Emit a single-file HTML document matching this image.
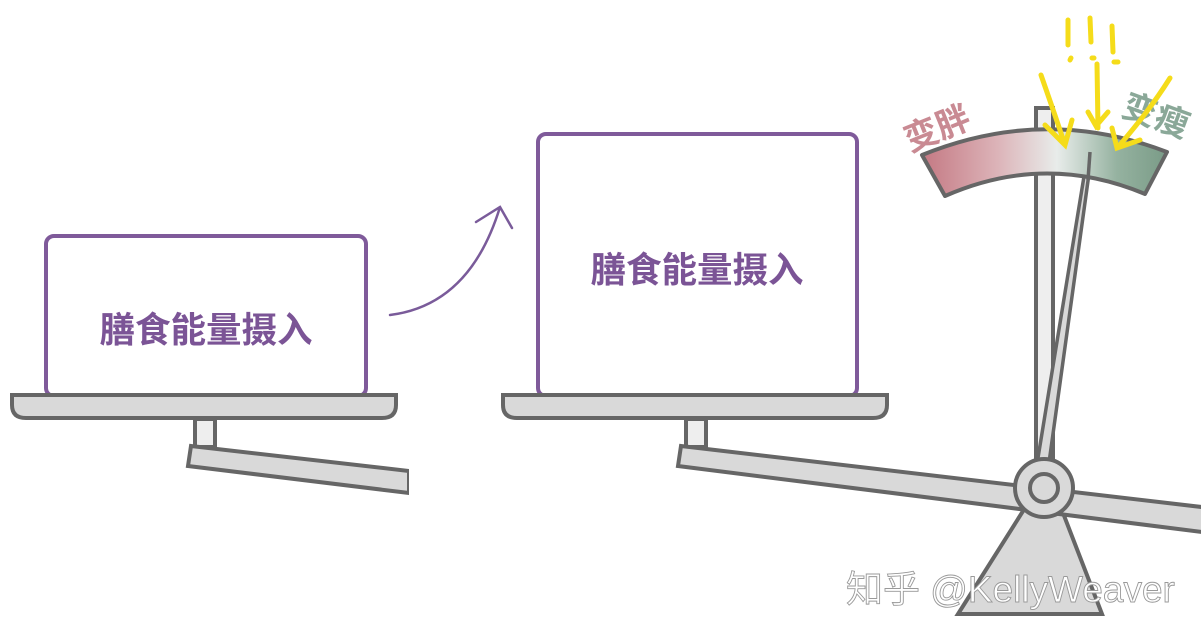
<!DOCTYPE html>
<html><head><meta charset="utf-8"><style>
html,body{margin:0;padding:0;background:#fff;width:1201px;height:641px;overflow:hidden}
svg{display:block}
text{font-family:"Liberation Sans","Noto Sans CJK SC",sans-serif}
</style></head><body>
<svg width="1201" height="641" viewBox="0 0 1201 641" xmlns="http://www.w3.org/2000/svg">
<defs>
<linearGradient id="g" x1="925" y1="0" x2="1165" y2="0" gradientUnits="userSpaceOnUse">
<stop offset="0" stop-color="#c57b85"/>
<stop offset="0.3" stop-color="#dcb3b8"/>
<stop offset="0.55" stop-color="#e8ecea"/>
<stop offset="0.8" stop-color="#95b2a0"/>
<stop offset="1" stop-color="#7b9c88"/>
</linearGradient>
</defs>
<rect x="46" y="236" width="320" height="160" rx="8" fill="#fff" stroke="#7f5a9a" stroke-width="4"/>
<text x="206" y="342" font-size="35.5" font-weight="bold" fill="#7b5496" text-anchor="middle">膳食能量摄入</text>
<path d="M12 395 H396 V405 Q396 418 382 418 H26 Q12 418 12 405 Z" fill="#d9d9d9" stroke="#666" stroke-width="4"/>
<rect x="195" y="419" width="20" height="28" fill="#eee" stroke="#666" stroke-width="4"/>
<path d="M191 446 L409 471 L409 493 L188 466 Z" fill="#d9d9d9" stroke="#666" stroke-width="4"/>
<rect x="409" y="440" width="20" height="70" fill="#fff"/>
<path d="M390 315 Q470 305 500 207 M476 222 L500 207 L512 228" fill="none" stroke="#7a5b9a" stroke-width="2.5" stroke-linecap="round"/>
<rect x="538" y="134" width="319" height="262" rx="8" fill="#fff" stroke="#7f5a9a" stroke-width="4"/>
<text x="697" y="282" font-size="35.5" font-weight="bold" fill="#7b5496" text-anchor="middle">膳食能量摄入</text>
<path d="M503 395 H887 V405 Q887 418 873 418 H517 Q503 418 503 405 Z" fill="#d9d9d9" stroke="#666" stroke-width="4"/>
<rect x="686" y="419" width="20" height="28" fill="#eee" stroke="#666" stroke-width="4"/>
<rect x="1036" y="108" width="17" height="370" fill="#eee" stroke="#666" stroke-width="4"/>
<path d="M1030 500 L1058 500 L1102 614 L958 614 Z" fill="#d9d9d9" stroke="#666" stroke-width="4"/>
<path d="M681 446 L1210 508 L1210 533 L678 466 Z" fill="#d9d9d9" stroke="#666" stroke-width="4"/>
<path d="M1088 152 L1092 152 L1048 470 L1036 470 Z" fill="#d9d9d9" stroke="#666" stroke-width="3.5"/>
<circle cx="1044" cy="488" r="29" fill="#d9d9d9" stroke="#666" stroke-width="4"/>
<circle cx="1044" cy="488" r="14" fill="#d9d9d9" stroke="#666" stroke-width="4"/>
<path d="M922 155 Q1045 105 1167 152 L1145 194 Q1045 152 945 196 Z" fill="url(#g)" stroke="#666" stroke-width="4" stroke-linejoin="round"/>
<line x1="1090" y1="152" x2="1088" y2="180" stroke="#666" stroke-width="3.5"/>
<text x="0" y="0" font-size="34" font-weight="bold" fill="#c98a93" transform="translate(910 152) rotate(-22)">变胖</text>
<text x="0" y="0" font-size="34" font-weight="bold" fill="#8aa898" transform="translate(1120 115) rotate(20)">变瘦</text>
<g stroke="#f5dc1a" stroke-width="5" stroke-linecap="round" fill="none">
<path d="M1068 20 L1068 45 M1090 18 L1091 42 M1112 26 L1113 52"/>
<path d="M1070 60 L1071 58 M1092 58 L1094 58 M1114 62 L1118 62"/>
<path d="M1041 75 Q1055 115 1065 145 M1045 125 L1065 145 L1072 120"/>
<path d="M1097 64 L1098 128 M1088 112 L1096 126 L1108 112"/>
<path d="M1170 78 Q1150 110 1118 147 M1112 128 L1117 148 L1140 140"/>
</g>
<g font-size="37" fill="#fff" stroke="#999" stroke-width="0.9">
<text x="846" y="602">知乎 @KellyWeaver</text>
</g>
</svg>
</body></html>
